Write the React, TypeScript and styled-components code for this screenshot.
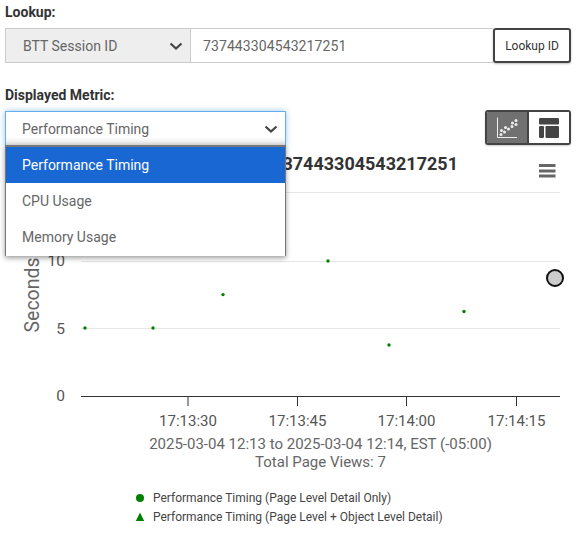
import React from "react";
import styled, { createGlobalStyle } from "styled-components";

const Global = createGlobalStyle`
  html, body { margin: 0; padding: 0; background: #fff; }
  body { font-family: Roboto, "Liberation Sans", sans-serif; }
`;
const Page = styled.div`
  width: 584px;
  height: 535px;
  overflow: hidden;
  position: relative;
`;
const Controls = styled.div`
  padding: 4px 13px 0 5px;
  display: flex;
  flex-direction: column;
`;
const Label = styled.div`
  font-size: 14px;
  font-weight: 700;
  line-height: 16px;
  color: #333;
  margin-bottom: 8px;
`;
const LookupRow = styled.div`
  display: flex;
  height: 35px;
  margin-bottom: 24px;
`;
const SelectBox = styled.div`
  width: 186px;
  box-sizing: border-box;
  display: flex;
  align-items: center;
  justify-content: space-between;
  padding: 0 6px 0 17px;
  background: #eee;
  border: 1px solid #ccc;
  font-size: 14px;
  color: #666;
`;
const IdInput = styled.div`
  flex: 1;
  border-top: 1px solid #ccc;
  border-bottom: 1px solid #ccc;
  display: flex;
  align-items: center;
  padding-left: 12px;
  font-size: 14px;
  letter-spacing: 0.1px;
  color: #666;
`;
const LookupButton = styled.button`
  width: 78px;
  box-sizing: border-box;
  border: 2px solid #444;
  border-radius: 3px;
  background: #fff;
  font: 400 12px Roboto, sans-serif;
  color: #333;
  padding: 0;
  box-shadow: 0 1px 2px rgba(0,0,0,.25);
`;
const MetricRow = styled.div`
  display: flex;
  justify-content: space-between;
  height: 35px;
`;
const MetricWrap = styled.div`
  position: relative;
  width: 281px;
`;
const MetricSelect = styled.div`
  height: 35px;
  box-sizing: border-box;
  border: 1px solid #66afe9;
  box-shadow: 0 0 6px rgba(102,175,233,.7), inset 0 -8px 6px -5px rgba(0,0,0,.14);
  display: flex;
  align-items: center;
  justify-content: space-between;
  padding: 0 6px 0 16px;
  font-size: 14px;
  color: #666;
  background: #fff;
`;
const Menu = styled.div`
  position: absolute;
  z-index: 2;
  left: 0;
  right: 0;
  top: 34px;
  height: 111px;
  box-sizing: border-box;
  background: #fff;
  border: 1px solid #777;
  border-top-width: 2px;
  border-bottom: none;
  box-shadow: 0 2px 5px rgba(0,0,0,.4);
`;
const MenuItem = styled.div<{ $active?: boolean }>`
  height: 36px;
  display: flex;
  align-items: center;
  padding-left: 16px;
  font-size: 14px;
  color: ${p => (p.$active ? "#fff" : "#666")};
  background: ${p => (p.$active ? "#1967d2" : "#fff")};
`;
const Toggle = styled.div`
  display: flex;
  width: 86px;
  height: 35px;
  margin-top: -1px;
  box-sizing: border-box;
  border: 2px solid #444;
  border-radius: 3px;
  box-shadow: 0 1px 2px rgba(0,0,0,.2);
  overflow: hidden;
`;
const ToggleButton = styled.div<{ $on?: boolean }>`
  flex: 1;
  display: flex;
  align-items: center;
  justify-content: center;
  background: ${p => (p.$on ? "#717171" : "#fff")};
  border-right: ${p => (p.$on ? "2px solid #444" : "none")};
`;
const Chart = styled.svg`
  display: block;
  width: 584px;
  height: 389px;
  font-family: Roboto, sans-serif;
`;
const Chevron = () => (
  <svg width="16" height="16" viewBox="0 0 16 16">
    <path d="M2.5 5.5 L8 10.5 L13.5 5.5" fill="none" stroke="#444" strokeWidth="2.2" />
  </svg>
);

const pts: [number, number][] = [[85, 328], [153, 328], [223, 294.6], [328, 261], [389, 345], [464, 311.5]];
const ticks: [number, string][] = [[188, "17:13:30"], [297.5, "17:13:45"], [406.5, "17:14:00"], [516.5, "17:14:15"]];

export default function App() {
  return (
    <Page>
      <Global />
      <Controls>
        <Label>Lookup:</Label>
        <LookupRow>
          <SelectBox>BTT Session ID <Chevron /></SelectBox>
          <IdInput>737443304543217251</IdInput>
          <LookupButton>Lookup ID</LookupButton>
        </LookupRow>
        <Label>Displayed Metric:</Label>
        <MetricRow>
          <MetricWrap>
            <MetricSelect>Performance Timing <Chevron /></MetricSelect>
            <Menu>
              <MenuItem $active>Performance Timing</MenuItem>
              <MenuItem>CPU Usage</MenuItem>
              <MenuItem>Memory Usage</MenuItem>
            </Menu>
          </MetricWrap>
          <Toggle>
            <ToggleButton $on>
              <svg width="22" height="22" viewBox="0 0 22 22">
                <path d="M1.5 0.5 V20.5 H21" fill="none" stroke="#eee" strokeWidth="1" />
                <g fill="#eee">
                  {[[5, 17.5], [5.5, 13.5], [8.5, 15], [9.5, 10.5], [12.5, 12], [16, 9.5], [16.5, 6], [20, 7.5], [20, 3.5]].map(([x, y], i) => (
                    <circle key={i} cx={x} cy={y} r="1.5" />
                  ))}
                </g>
              </svg>
            </ToggleButton>
            <ToggleButton>
              <svg width="20" height="20" viewBox="0 0 20 20">
                <g fill="#444">
                  <rect x="0" y="0" width="20" height="6.5" rx="1.2" />
                  <rect x="0" y="8" width="5" height="12" rx="1.2" />
                  <rect x="6.5" y="8" width="13.5" height="12" rx="1.2" />
                </g>
              </svg>
            </ToggleButton>
          </Toggle>
        </MetricRow>
      </Controls>
      <Chart viewBox="0 146 584 389">
        <text x="458" y="170" textAnchor="end" fontSize="18" fontWeight="700" fill="#333">BTT Session ID: 737443304543217251</text>
        <g stroke="#666" strokeWidth="3">
          <line x1="539" x2="555.5" y1="165.5" y2="165.5" />
          <line x1="539" x2="555.5" y1="171" y2="171" />
          <line x1="539" x2="555.5" y1="176" y2="176" />
        </g>
        <g stroke="#e6e6e6">
          <line x1="81" x2="560" y1="192.5" y2="192.5" />
          <line x1="81" x2="560" y1="261.5" y2="261.5" />
          <line x1="81" x2="560" y1="328.5" y2="328.5" />
        </g>
        <line x1="81" x2="560" y1="396.5" y2="396.5" stroke="#333" />
        {ticks.map(([x, t]) => (
          <g key={t}>
            <line x1={x} x2={x} y1="396" y2="406" stroke="#333" />
            <text x={x} y="426" textAnchor="middle" fontSize="15" fill="#555">{t}</text>
          </g>
        ))}
        <g textAnchor="end" fontSize="15.5" fill="#555">
          <text x="65" y="266">10</text>
          <text x="65" y="334">5</text>
          <text x="65" y="401">0</text>
        </g>
        <text transform="translate(39 295) rotate(-90)" textAnchor="middle" fontSize="19.5" fill="#666">Seconds</text>
        {pts.map(([x, y]) => (
          <circle key={x} cx={x} cy={y} r="1.7" fill="#008000" />
        ))}
        <circle cx="555" cy="278" r="8" fill="#ccc" stroke="#111" strokeWidth="2" />
        <g textAnchor="middle" fontSize="15" fill="#666">
          <text x="320.5" y="449">2025-03-04 12:13 to 2025-03-04 12:14, EST (-05:00)</text>
          <text x="320.5" y="467">Total Page Views: 7</text>
        </g>
        <circle cx="140" cy="498" r="4" fill="#008000" />
        <path d="M140 512.5 L144.2 521 L135.8 521 Z" fill="#008000" />
        <g fontSize="12" fill="#444">
          <text x="153" y="502">Performance Timing (Page Level Detail Only)</text>
          <text x="153" y="521">Performance Timing (Page Level + Object Level Detail)</text>
        </g>
      </Chart>
    </Page>
  );
}
